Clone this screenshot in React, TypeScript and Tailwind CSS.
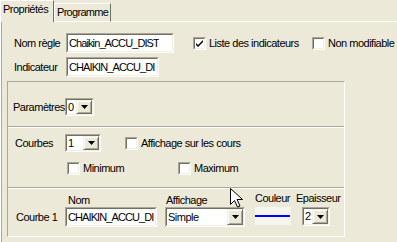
import React from "react";

function Sunken({ className, children }: { className: string; children?: React.ReactNode }) {
  return (
    <div className={"border border-t-[#ACA899] border-l-[#ACA899] border-r-white border-b-white " + className}>
      <div className="flex h-full w-full border border-t-[#716F64] border-l-[#716F64] border-r-[#F1EFE2] border-b-[#F1EFE2] bg-white">
        {children}
      </div>
    </div>
  );
}

function TextBox({ value, className }: { value: string; className: string }) {
  return (
    <Sunken className={className}>
      <span className="flex items-center pl-[1px] leading-none tracking-[-0.9px] whitespace-nowrap overflow-hidden">{value}</span>
    </Sunken>
  );
}

function Combo({ value, className }: { value: string; className: string }) {
  return (
    <Sunken className={className}>
      <span className="flex flex-1 items-center pl-[1px] leading-none">{value}</span>
      <span className="flex w-[16px] items-center justify-center border border-t-[#F1EFE2] border-l-[#F1EFE2] border-r-[#716F64] border-b-[#716F64] bg-[#ECE9D8] shadow-[inset_1px_1px_0_#fff,inset_-1px_-1px_0_#ACA899]">
        <svg width="7" height="4" viewBox="0 0 7 4">
          <path d="M0 0h7L3.5 4z" fill="#000" />
        </svg>
      </span>
    </Sunken>
  );
}

function Check({ checked }: { checked?: boolean }) {
  return (
    <Sunken className="h-[13px] w-[13px] shrink-0">
      {checked && (
        <svg width="9" height="9" viewBox="0 0 9 9" className="m-auto">
          <path d="M1 4l2 2 5-5v2L3 8 1 6z" fill="#000" />
        </svg>
      )}
    </Sunken>
  );
}

function CheckLabel({ label, checked, className }: { label: string; checked?: boolean; className: string }) {
  return (
    <div className={"flex items-center " + className}>
      <Check checked={checked} />
      <span className="ml-[3px] leading-none whitespace-nowrap">{label}</span>
    </div>
  );
}

export default function App() {
  return (
    <div className="relative flex h-[242px] w-[397px] flex-col overflow-hidden bg-[#ECE9D8] text-[11px] tracking-[-0.5px] text-black font-['Liberation_Sans',Arial,sans-serif]">
      {/* tab strip */}
      <div className="flex h-[22px] items-end">
        <div className="h-[22px] w-[54px] border-l border-t border-r border-white border-r-[#716F64] pl-[2px] pt-[2px] leading-[13px]">
          Propriétés
        </div>
        <div className="h-[19px] w-[57px] border border-white border-r-[#716F64] pl-[2px] pt-[2px] leading-[13px] tracking-[-0.7px]">
          Programme
        </div>
        <div className="h-[2px] flex-1 border-b border-white" />
      </div>

      {/* page */}
      <div className="flex flex-1 flex-col border-l border-white">
        <div className="flex flex-1 flex-col border-l border-[#ACA899]">
          <div className="flex h-[59px] flex-col pl-[12px] pt-[11px]">
            <div className="flex h-[20px] items-center">
              <span className="w-[52px]">Nom règle</span>
              <TextBox value="Chaikin_ACCU_DIST" className="h-[20px] w-[108px]" />
              <CheckLabel label="Liste des indicateurs" checked className="ml-[19px] w-[119px]" />
              <CheckLabel label="Non modifiable" className="" />
            </div>
            <div className="mt-[4px] flex h-[20px] items-center">
              <span className="w-[52px]">Indicateur</span>
              <TextBox value="CHAIKIN_ACCU_DI" className="h-[20px] w-[93px]" />
            </div>
          </div>

          {/* frame */}
          <div className="ml-[5px] flex h-[156px] w-[338px] flex-col border border-t-[#ACA899] border-l-[#ACA899] border-r-white border-b-white">
            <div className="flex h-[44px] flex-col pl-[5px] pt-[16px]">
              <div className="flex h-[18px] items-center">
                <span className="w-[52px]">Paramètres</span>
                <Combo value="0" className="h-[18px] w-[29px]" />
              </div>
            </div>
            <div className="h-[2px] border-t border-[#ACA899] border-b border-b-white" />

            <div className="flex h-[59px] flex-col pl-[7px] pt-[6px]">
              <div className="flex h-[18px] items-center">
                <span className="w-[50px]">Courbes</span>
                <Combo value="1" className="h-[18px] w-[36px]" />
                <CheckLabel label="Affichage sur les cours" className="ml-[24px]" />
              </div>
              <div className="mt-[10px] flex h-[13px] items-center pl-[52px]">
                <CheckLabel label="Minimum" className="w-[111px]" />
                <CheckLabel label="Maximum" className="" />
              </div>
            </div>
            <div className="h-[2px] border-t border-[#ACA899] border-b border-b-white" />

            <div className="flex flex-1 flex-col pl-[8px] pt-[3px]">
              <div className="flex h-[15px] items-start leading-[13px]">
                <span className="ml-[52px] mt-[2px] w-[98px]">Nom</span>
                <span className="mt-[2px] w-[89px]">Affichage</span>
                <span className="w-[41px]">Couleur</span>
                <span>Epaisseur</span>
              </div>
              <div className="flex h-[20px] items-start">
                <span className="flex h-[20px] w-[49px] items-center">Courbe 1</span>
                <TextBox value="CHAIKIN_ACCU_DI" className="h-[20px] w-[92px]" />
                <Combo value="Simple" className="ml-[8px] h-[20px] w-[80px]" />
                <div className="ml-[10px] flex h-[18px] w-[36px] items-center bg-[#F7F6EE]">
                  <div className="h-[2px] w-[35px] bg-[#0000FF]" />
                </div>
                <Combo value="2" className="ml-[11px] h-[19px] w-[28px]" />
              </div>
            </div>
          </div>
        </div>
      </div>

      {/* mouse pointer */}
      <svg className="absolute left-[230px] top-[188px]" width="13" height="20" viewBox="0 0 13 20">
        <path d="M0.5 0.5v16l4-4 3 6.5 2.5-1-3-6.5h5.5z" fill="#fff" stroke="#000" strokeWidth="1" />
      </svg>
    </div>
  );
}
